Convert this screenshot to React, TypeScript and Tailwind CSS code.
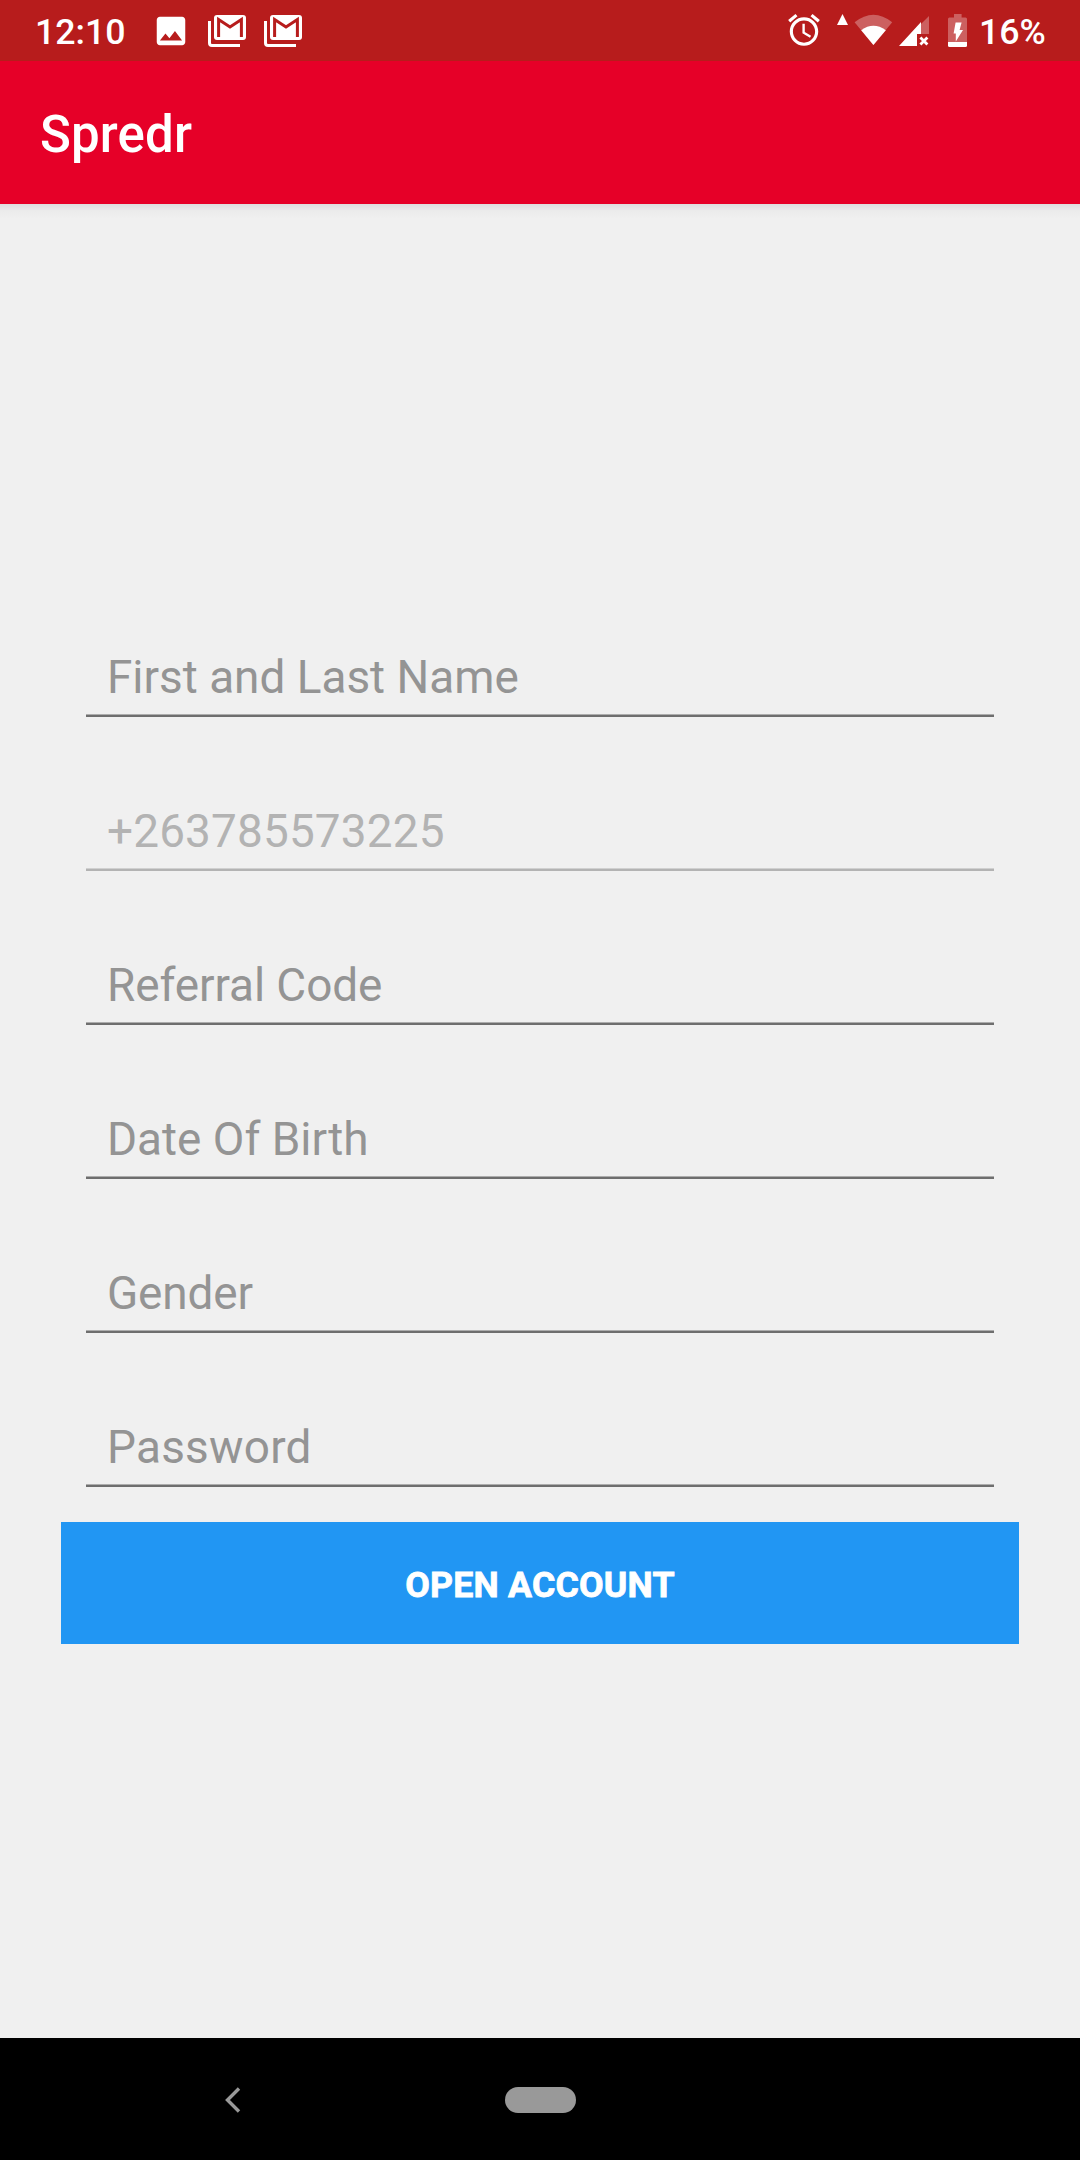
interface Field {
  label: string;
  tracking?: string;
  disabled?: boolean;
}

const fields: Field[] = [
  { label: "First and Last Name" },
  { label: "+263785573225", tracking: "tracking-[0.16px]", disabled: true },
  { label: "Referral Code", tracking: "tracking-[-0.08px]" },
  { label: "Date Of Birth" },
  { label: "Gender", tracking: "tracking-[-0.15px]" },
  { label: "Password", tracking: "tracking-[0.25px]" },
];

function ImageIcon() {
  return (
    <svg width="38" height="38" viewBox="0 0 24 24" fill="white">
      <path d="M21 19V5c0-1.1-.9-2-2-2H5c-1.1 0-2 .9-2 2v14c0 1.1.9 2 2 2h14c1.1 0 2-.9 2-2zM8.5 13.5l2.5 3.01L14.5 12l4.5 6H5l3.5-4.5z" />
    </svg>
  );
}

function MailStackIcon() {
  return (
    <svg width="38" height="32" viewBox="0 0 38 32">
      <path d="M1.5 6v22a2.5 2.5 0 0 0 2.5 2.5h28" fill="none" stroke="white" strokeWidth="3" />
      <rect x="6" y="0" width="32" height="25" rx="3" fill="white" />
      <path d="M10.6 22V4.6L22 12L33.4 4.6V22" fill="none" stroke="#b71c1c" strokeWidth="3" />
    </svg>
  );
}

function AlarmIcon() {
  return (
    <svg className="mb-[1px]" width="38" height="38" viewBox="0 0 24 24" fill="white">
      <path d="M22 5.72l-4.6-3.86-1.29 1.53 4.6 3.86L22 5.72zM7.88 3.39L6.6 1.86 2 5.71l1.29 1.53 4.59-3.85zM12.5 8H11v6l4.75 2.85.75-1.23-4-2.37V8zM12 4c-4.97 0-9 4.03-9 9s4.02 9 9 9c4.97 0 9-4.03 9-9s-4.03-9-9-9zm0 16c-3.87 0-7-3.13-7-7s3.13-7 7-7 7 3.13 7 7-3.13 7-7 7z" />
    </svg>
  );
}

function WifiIcon() {
  return (
    <svg width="56" height="61" viewBox="837 0 56 61" fill="white">
      <path d="M842.5 14L848 25H837z" />
      <path d="M854.6 22.2Q873.4 7.2 892.2 22.2L873.4 45z" fillOpacity="0.3" />
      <path d="M861.2 30.2Q873.4 21.4 885.8 30.2L873.4 45z" />
    </svg>
  );
}

function SignalIcon() {
  return (
    <svg width="30" height="61" viewBox="899 0 30 61" fill="white">
      <path d="M921 24L929 16V34H921z" fillOpacity="0.3" />
      <path d="M899 46L921 22V34H917V46z" />
      <path d="M920.4 37.4L927.4 44.4M927.4 37.4L920.4 44.4" stroke="white" strokeWidth="2.8" />
    </svg>
  );
}

function BatteryIcon() {
  return (
    <svg width="19" height="61" viewBox="948 0 19 61" fill="white">
      <path d="M954 14H961.6V17.5H965.5Q967 17.5 967 19V42H948V19Q948 17.5 949.5 17.5H954z" fillOpacity="0.3" />
      <path d="M948 42H967V45.5Q967 47 965.5 47H949.5Q948 47 948 45.5z" />
      <path d="M955.6 22.5H961.6L959.6 30H963L955.8 41.5V33.5H953.6z" />
    </svg>
  );
}

function StatusBar() {
  return (
    <div className="flex h-[61px] items-center bg-[#b71c1c] text-[35.7px] font-medium leading-[61px] text-white">
      <span className="ml-[35px] w-[117px] pt-[3px]">12:10</span>
      <ImageIcon />
      <div className="ml-[18px] flex gap-[18px]">
        <MailStackIcon />
        <MailStackIcon />
      </div>
      <div className="ml-auto flex items-center">
        <AlarmIcon />
        <div className="ml-[14px] flex">
          <WifiIcon />
        </div>
        <div className="ml-[6px] flex gap-[19px]">
          <SignalIcon />
          <BatteryIcon />
        </div>
        <span className="ml-[12px] w-[101px] pt-[3px]">16%</span>
      </div>
    </div>
  );
}

function FormField({ label, tracking = "", disabled }: Field) {
  return (
    <div className="flex h-[154px] flex-col justify-end">
      <span
        className={`pl-[21px] pb-[10px] text-[45.9px] leading-[54px] ${tracking} ${
          disabled ? "text-[#b3b3b3]" : "text-[#949494]"
        }`}
      >
        {label}
      </span>
      <div
        className={`h-[3px] border-t ${
          disabled ? "border-[#d0d0d0] bg-[#b3b3b3]" : "border-[#adadad] bg-[#6e6e6e]"
        }`}
      />
    </div>
  );
}

export default function App() {
  return (
    <div className="flex h-[2160px] w-[1080px] flex-col overflow-hidden bg-[#f0f0f0] font-[Roboto,sans-serif]">
      <StatusBar />

      <header className="flex h-[143px] items-center bg-[#e60028] pt-[4px] pl-[40px]">
        <h1 className="text-[51px] font-medium leading-[60px] tracking-[0.15px] text-white">Spredr</h1>
      </header>
      <div className="h-[16px] bg-linear-to-b from-[#dedede] via-[#ebebeb] via-40% to-[#f0f0f0] to-90%" />

      <main className="flex flex-1 flex-col px-[61px] pt-[343px]">
        <div className="px-[25px]">
          {fields.map((field) => (
            <FormField key={field.label} {...field} />
          ))}
        </div>
        <button className="mt-[35px] h-[122px] bg-[#2196f3] pt-[5px] text-[35.7px] font-bold tracking-[0.2px] text-white [-webkit-text-stroke:0.8px_white]">
          OPEN ACCOUNT
        </button>
      </main>

      <nav className="flex h-[122px] items-center bg-black pt-[1px]">
        <svg className="ml-[225px]" width="16" height="26" viewBox="0 0 16 26">
          <path d="M14 1.5L2.5 13L14 24.5" fill="none" stroke="#999999" strokeWidth="3.4" />
        </svg>
        <div className="ml-[264px] h-[26px] w-[71px] rounded-full bg-[#999999]" />
      </nav>
    </div>
  );
}
